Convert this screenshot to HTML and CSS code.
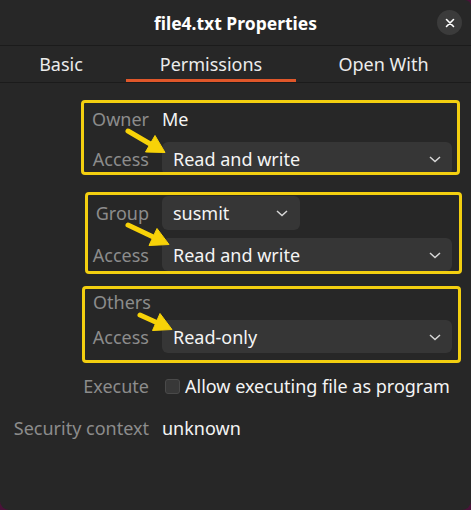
FILE: index.html
```html
<!DOCTYPE html>
<html lang="en">
<head>
<meta charset="utf-8">
<title>file4.txt Properties</title>
<link rel="stylesheet" href="styles.css">
</head>
<body>
<div class="window">
  <header class="titlebar">
    <h1 class="title">file4.txt Properties</h1>
    <button class="close" aria-label="Close">
      <svg width="10" height="10" viewBox="0 0 10 10"><path d="M1.5 1.5 L8.5 8.5 M8.5 1.5 L1.5 8.5" stroke="#ffffff" stroke-width="1.6" stroke-linecap="round" fill="none"/></svg>
    </button>
  </header>
  <nav class="tabs">
    <div class="tab tab-basic">Basic</div>
    <div class="tab tab-perm active">Permissions</div>
    <div class="tab tab-open">Open With</div>
  </nav>
  <main class="content">
    <section class="box box-owner">
      <div class="label">Owner</div>
      <div class="value">Me</div>
      <div class="label">Access</div>
      <div class="dropdown"><span>Read and write</span><svg class="chev" width="12" height="7" viewBox="0 0 12 7"><path d="M1 1 L6 5.5 L11 1" stroke="#d6d6d6" stroke-width="1.5" fill="none"/></svg></div>
      <svg class="arrow" viewBox="0 0 373 69" width="373" height="69">
        <line x1="44" y1="28" x2="70.5" y2="43.5" class="shaft"/>
        <polygon points="81,49.5 61.5,49 71,32.5" class="head"/>
      </svg>
    </section>

    <section class="box box-group">
      <div class="label">Group</div>
      <div class="dropdown small"><span>susmit</span><svg class="chev" width="12" height="7" viewBox="0 0 12 7"><path d="M1 1 L6 5.5 L11 1" stroke="#d6d6d6" stroke-width="1.5" fill="none"/></svg></div>
      <div class="label">Access</div>
      <div class="dropdown"><span>Read and write</span><svg class="chev" width="12" height="7" viewBox="0 0 12 7"><path d="M1 1 L6 5.5 L11 1" stroke="#d6d6d6" stroke-width="1.5" fill="none"/></svg></div>
      <svg class="arrow" viewBox="0 0 371 76" width="371" height="76">
        <line x1="40" y1="30" x2="70" y2="44.3" class="shaft"/>
        <polygon points="81,49.5 61,50.5 69,33.5" class="head"/>
      </svg>
    </section>

    <section class="box box-others">
      <div class="label heading">Others</div>
      <div class="label">Access</div>
      <div class="dropdown"><span>Read-only</span><svg class="chev" width="12" height="7" viewBox="0 0 12 7"><path d="M1 1 L6 5.5 L11 1" stroke="#d6d6d6" stroke-width="1.5" fill="none"/></svg></div>
      <svg class="arrow" viewBox="0 0 373 71" width="373" height="71">
        <line x1="55" y1="26" x2="76" y2="35.5" class="shaft"/>
        <polygon points="87,40.5 67.5,41.5 75,24.5" class="head"/>
      </svg>
    </section>

    <div class="rows">
      <div class="label">Execute</div>
      <label class="check"><span class="checkbox"></span><span class="value">Allow executing file as program</span></label>
      <div class="label">Security context</div>
      <div class="value">unknown</div>
    </div>
  </main>
</div>
</body>
</html>
```

FILE: styles.css
```css
html, body {
  margin: 0;
  padding: 0;
}

body {
  background: #4a1239;
  font-family: "Noto Sans", "Open Sans", sans-serif;
  font-size: 18px;
  color: #f2f2f2;
}

.window {
  height: 510px;
  background: #272727;
  border-radius: 0 6px 9px 9px;
  overflow: hidden;
}

.titlebar {
  height: 46px;
  box-sizing: border-box;
  border-bottom: 1px solid #1b1b1b;
  display: grid;
  grid-template-columns: 1fr auto 1fr;
  align-items: center;
}

.title {
  grid-column: 2;
  margin: 0;
  font-size: 17.5px;
  font-weight: 700;
  color: #ffffff;
  line-height: 24px;
}

.close {
  grid-column: 3;
  justify-self: end;
  margin-right: 9px;
  width: 25px;
  height: 25px;
  padding: 0;
  border: none;
  border-radius: 50%;
  background: #3b3b3b;
  display: grid;
  place-items: center;
}

.tabs {
  display: flex;
  height: 37px;
  box-sizing: border-box;
  border-bottom: 1px solid #1b1b1b;
}

.tab {
  display: flex;
  align-items: center;
  justify-content: center;
  color: #ececec;
  line-height: 24px;
}

.tab-basic { width: 122px; }
.tab-perm { width: 170px; margin-left: 4px; }
.tab-open { width: 175px; }

.tab.active {
  box-shadow: inset 0 -3px 0 #e0572a;
}

.content {
  padding-top: 17px;
}

.box {
  position: relative;
  box-sizing: border-box;
  border: 3px solid #f3cf10;
  border-radius: 4px;
  display: grid;
  column-gap: 13px;
  align-items: center;
  align-content: start;
  overflow: hidden;
  line-height: 24px;
}

.box-owner {
  margin-left: 81px;
  width: 379px;
  height: 75px;
  grid-template-columns: 65px 1fr;
  padding: 4px 5px 0 0;
  row-gap: 11px;
}

.box-group {
  margin-top: 17px;
  margin-left: 85px;
  width: 377px;
  height: 82px;
  grid-template-columns: 61px 1fr;
  padding: 1px 7px 0 0;
  row-gap: 8px;
}

.box-others {
  margin-top: 12px;
  margin-left: 82px;
  width: 379px;
  height: 77px;
  grid-template-columns: 64px 1fr;
  padding: 1px 6px 0 0;
  row-gap: 6px;
}

.label {
  text-align: right;
  color: #8c8c8c;
  white-space: nowrap;
}

.heading {
  grid-column: 1 / -1;
  text-align: left;
  padding-left: 8px;
}

.value {
  color: #f4f4f4;
  white-space: nowrap;
}

.dropdown {
  height: 33px;
  box-sizing: border-box;
  background: #363636;
  border-radius: 6px;
  display: flex;
  align-items: center;
  justify-content: space-between;
  padding: 0 11px 0 11px;
  color: #f4f4f4;
  white-space: nowrap;
}

.dropdown.small {
  width: 138px;
  height: 34px;
  justify-self: start;
  padding-right: 12px;
}

.chev {
  display: block;
  margin-top: 1px;
}

.arrow {
  position: absolute;
  left: 0;
  top: 0;
  pointer-events: none;
}

.shaft {
  stroke: #f7d208;
  stroke-width: 5;
  stroke-linecap: round;
}

.head {
  fill: #f7d208;
  stroke: #f7d208;
  stroke-width: 1;
  stroke-linejoin: round;
}

.rows {
  margin-top: 11px;
  display: grid;
  grid-template-columns: 149px 1fr;
  column-gap: 13px;
  row-gap: 18px;
  line-height: 24px;
  align-items: center;
}

.check {
  display: flex;
  align-items: center;
  gap: 5px;
}

.checkbox {
  width: 15px;
  height: 15px;
  margin-left: 3px;
  box-sizing: border-box;
  background: #383838;
  border: 1px solid #4a4a4a;
  border-radius: 3px;
}
```
